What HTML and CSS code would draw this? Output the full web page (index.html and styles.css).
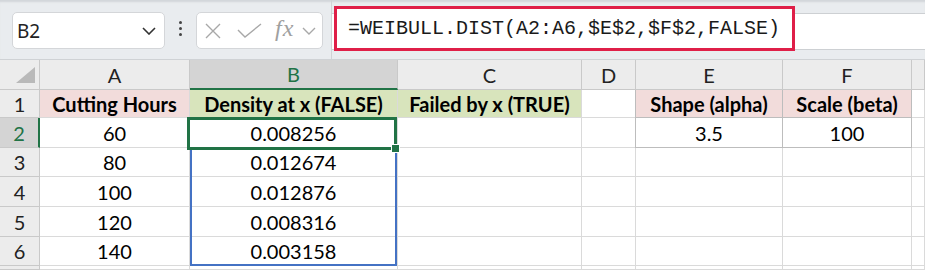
FILE: index.html
```html
<!DOCTYPE html>
<html lang="en">

<head>
    <meta charset="UTF-8">
    <meta name="viewport" content="width=device-width, initial-scale=1.0">
    <title>Weibull Dist</title>
    <link rel="stylesheet" href="styles.css">
</head>

<body>
    <div class="toolbar">
        <div class="name-box">
            <span>B2</span>
            <svg class="chev" width="14" height="8" viewBox="0 0 14 8"><path d="M1 1 L7 7 L13 1" fill="none" stroke="#333" stroke-width="1.6"/></svg>
        </div>
        <div class="dots"><i></i><i></i><i></i></div>
        <div class="fx-box">
            <svg class="ico-x" width="18" height="16" viewBox="0 0 18 16"><path d="M2 1 L16 15 M16 1 L2 15" stroke="#a8a8a8" stroke-width="1.4" fill="none"/></svg>
            <svg class="ico-ok" width="25" height="16" viewBox="0 0 25 16"><path d="M1 7 L8 14 L24 1" stroke="#a8a8a8" stroke-width="1.4" fill="none"/></svg>
            <span class="fx">fx</span>
            <svg class="ico-dd" width="14" height="8" viewBox="0 0 14 8"><path d="M1 1 L7 7 L13 1" fill="none" stroke="#a8a8a8" stroke-width="1.4"/></svg>
        </div>
        <div class="formula-wrap">
            <div class="formula-box">=WEIBULL.DIST(A2:A6,$E$2,$F$2,FALSE)</div>
        </div>
    </div>

    <div class="sheet">
        <!-- column headers -->
        <div class="cell hd corner">
            <svg width="19" height="16" viewBox="0 0 19 16"><path d="M19 0 L19 16 L0 16 Z" fill="#b9b9b9"/></svg>
        </div>
        <div class="cell hd">A</div>
        <div class="cell hd sel-col">B</div>
        <div class="cell hd">C</div>
        <div class="cell hd">D</div>
        <div class="cell hd">E</div>
        <div class="cell hd">F</div>
        <div class="cell hd"></div>

        <!-- row 1 -->
        <div class="cell hd rn">1</div>
        <div class="cell bold pink">Cutting Hours</div>
        <div class="cell bold green">Density at x (FALSE)</div>
        <div class="cell bold green">Failed by x (TRUE)</div>
        <div class="cell"></div>
        <div class="cell bold pink boxed first">Shape (alpha)</div>
        <div class="cell bold pink boxed">Scale (beta)</div>
        <div class="cell"></div>

        <!-- row 2 -->
        <div class="cell hd rn sel-row">2</div>
        <div class="cell">60</div>
        <div class="cell b2">
            0.008256
            <div class="range"></div>
            <div class="active"><span class="handle"></span></div>
        </div>
        <div class="cell"></div>
        <div class="cell"></div>
        <div class="cell boxed first">3.5</div>
        <div class="cell boxed">100</div>
        <div class="cell"></div>

        <!-- row 3 -->
        <div class="cell hd rn">3</div>
        <div class="cell">80</div>
        <div class="cell">0.012674</div>
        <div class="cell"></div>
        <div class="cell"></div>
        <div class="cell"></div>
        <div class="cell"></div>
        <div class="cell"></div>

        <!-- row 4 -->
        <div class="cell hd rn">4</div>
        <div class="cell">100</div>
        <div class="cell">0.012876</div>
        <div class="cell"></div>
        <div class="cell"></div>
        <div class="cell"></div>
        <div class="cell"></div>
        <div class="cell"></div>

        <!-- row 5 -->
        <div class="cell hd rn">5</div>
        <div class="cell">120</div>
        <div class="cell">0.008316</div>
        <div class="cell"></div>
        <div class="cell"></div>
        <div class="cell"></div>
        <div class="cell"></div>
        <div class="cell"></div>

        <!-- row 6 -->
        <div class="cell hd rn">6</div>
        <div class="cell">140</div>
        <div class="cell">0.003158</div>
        <div class="cell"></div>
        <div class="cell"></div>
        <div class="cell"></div>
        <div class="cell"></div>
        <div class="cell"></div>

        <!-- row 7 (cut off) -->
        <div class="cell hd rn"></div>
        <div class="cell"></div>
        <div class="cell"></div>
        <div class="cell"></div>
        <div class="cell"></div>
        <div class="cell"></div>
        <div class="cell"></div>
        <div class="cell"></div>
    </div>
</body>

</html>
```

FILE: styles.css
```css
body {
    margin: 0;
    padding: 0;
    width: 925px;
    height: 270px;
    overflow: hidden;
    background-color: #fff;
    font-family: Lato, "Open Sans", sans-serif;
}

/* top bar */
.toolbar {
    height: 60px;
    display: flex;
    align-items: flex-start;
    padding-left: 12px;
    background-color: #e9ecef;
    box-shadow: inset 0 3px 2px -1px #d2d6da;
    border-bottom: 1px solid #cfd2d5;
    box-sizing: border-box;
}

.name-box {
    margin-top: 12px;
    width: 153px;
    height: 37px;
    box-sizing: border-box;
    background-color: #fff;
    border: 1px solid #d4d6d9;
    border-radius: 5px;
    display: flex;
    align-items: center;
    justify-content: space-between;
    padding: 0 8px 0 4px;
    font-family: "Noto Sans", sans-serif;
    font-size: 19px;
    color: #222;
}

.dots {
    width: 31px;
    height: 60px;
    display: flex;
    flex-direction: column;
    align-items: center;
    justify-content: center;
    gap: 3px;
    padding-bottom: 3px;
    box-sizing: border-box;
}

.dots i {
    width: 3px;
    height: 3px;
    border-radius: 50%;
    background-color: #444;
}

.fx-box {
    margin-top: 12px;
    width: 127px;
    height: 37px;
    box-sizing: border-box;
    background-color: #fff;
    border: 1px solid #d4d6d9;
    border-radius: 5px;
    display: flex;
    align-items: center;
    padding-left: 7px;
}

.ico-ok {
    margin-left: 15px;
}

.fx {
    margin-left: 13px;
    font-family: "Liberation Serif", serif;
    font-style: italic;
    font-size: 24px;
    color: #a0a0a0;
    margin-top: -4px;
    letter-spacing: 1px;
}

.ico-dd {
    margin-left: 8px;
}

.formula-wrap {
    flex: 1;
    height: 59px;
    margin-left: 8px;
    border-left: 1px solid #d0d3d6;
    background: linear-gradient(to bottom, transparent 13px, #cdd0d3 13px, #cdd0d3 14px, #fff 14px, #fff 49px, #cdd0d3 49px, #cdd0d3 50px, transparent 50px);
}

.formula-box {
    margin: 6px 0 0 2px;
    width: 461px;
    height: 45px;
    box-sizing: border-box;
    border: 3px solid #df1f48;
    background-color: #fff;
    padding-left: 11px;
    font-family: "Liberation Mono", monospace;
    font-size: 20px;
    line-height: 39px;
    color: #1a1a1a;
}

/* spreadsheet grid */
.sheet {
    display: grid;
    grid-template-columns: 40px 150px 208px 184px 54px 147px 129px 1fr;
    grid-template-rows: 30px 28px 30px 29px 30px 30px 29px 1fr;
    height: 210px;
}

.cell {
    border-right: 1px solid #dadada;
    border-bottom: 1px solid #dadada;
    display: flex;
    align-items: center;
    justify-content: center;
    font-size: 20px;
    color: #000;
    min-width: 0;
    white-space: nowrap;
}

.hd {
    background-color: #ececec;
    border-color: #c9c9c9;
    color: #222;
}

.corner {
    align-items: flex-end;
    justify-content: flex-end;
    padding: 0 4px 6px 0;
}

.sel-col {
    background-color: #d4d4d4;
    border-bottom: 2px solid #217346;
    color: #217346;
}

.sel-row {
    background-color: #d4d4d4;
    border-right: 2px solid #217346;
    color: #217346;
}

.bold {
    font-weight: bold;
}

.pink {
    background-color: #f2dcdb;
}

.green {
    background-color: #d8e4bc;
}

.boxed {
    border-right-color: #bdbdbd;
    border-bottom-color: #bdbdbd;
}

.first {
    box-shadow: -1px 0 0 #bdbdbd;
}

/* selection */
.b2 {
    position: relative;
}

.range {
    position: absolute;
    left: 0;
    top: 30px;
    width: 207px;
    height: 118px;
    box-sizing: border-box;
    border: 2px solid #4472c4;
    border-top: none;
}

.active {
    position: absolute;
    left: -3px;
    top: -1px;
    width: 210px;
    height: 33px;
    box-sizing: border-box;
    border: 3px solid #217346;
}

.handle {
    position: absolute;
    right: -5px;
    bottom: -5px;
    width: 7px;
    height: 7px;
    background-color: #217346;
    box-shadow: 0 0 0 1px #fff;
}
```
